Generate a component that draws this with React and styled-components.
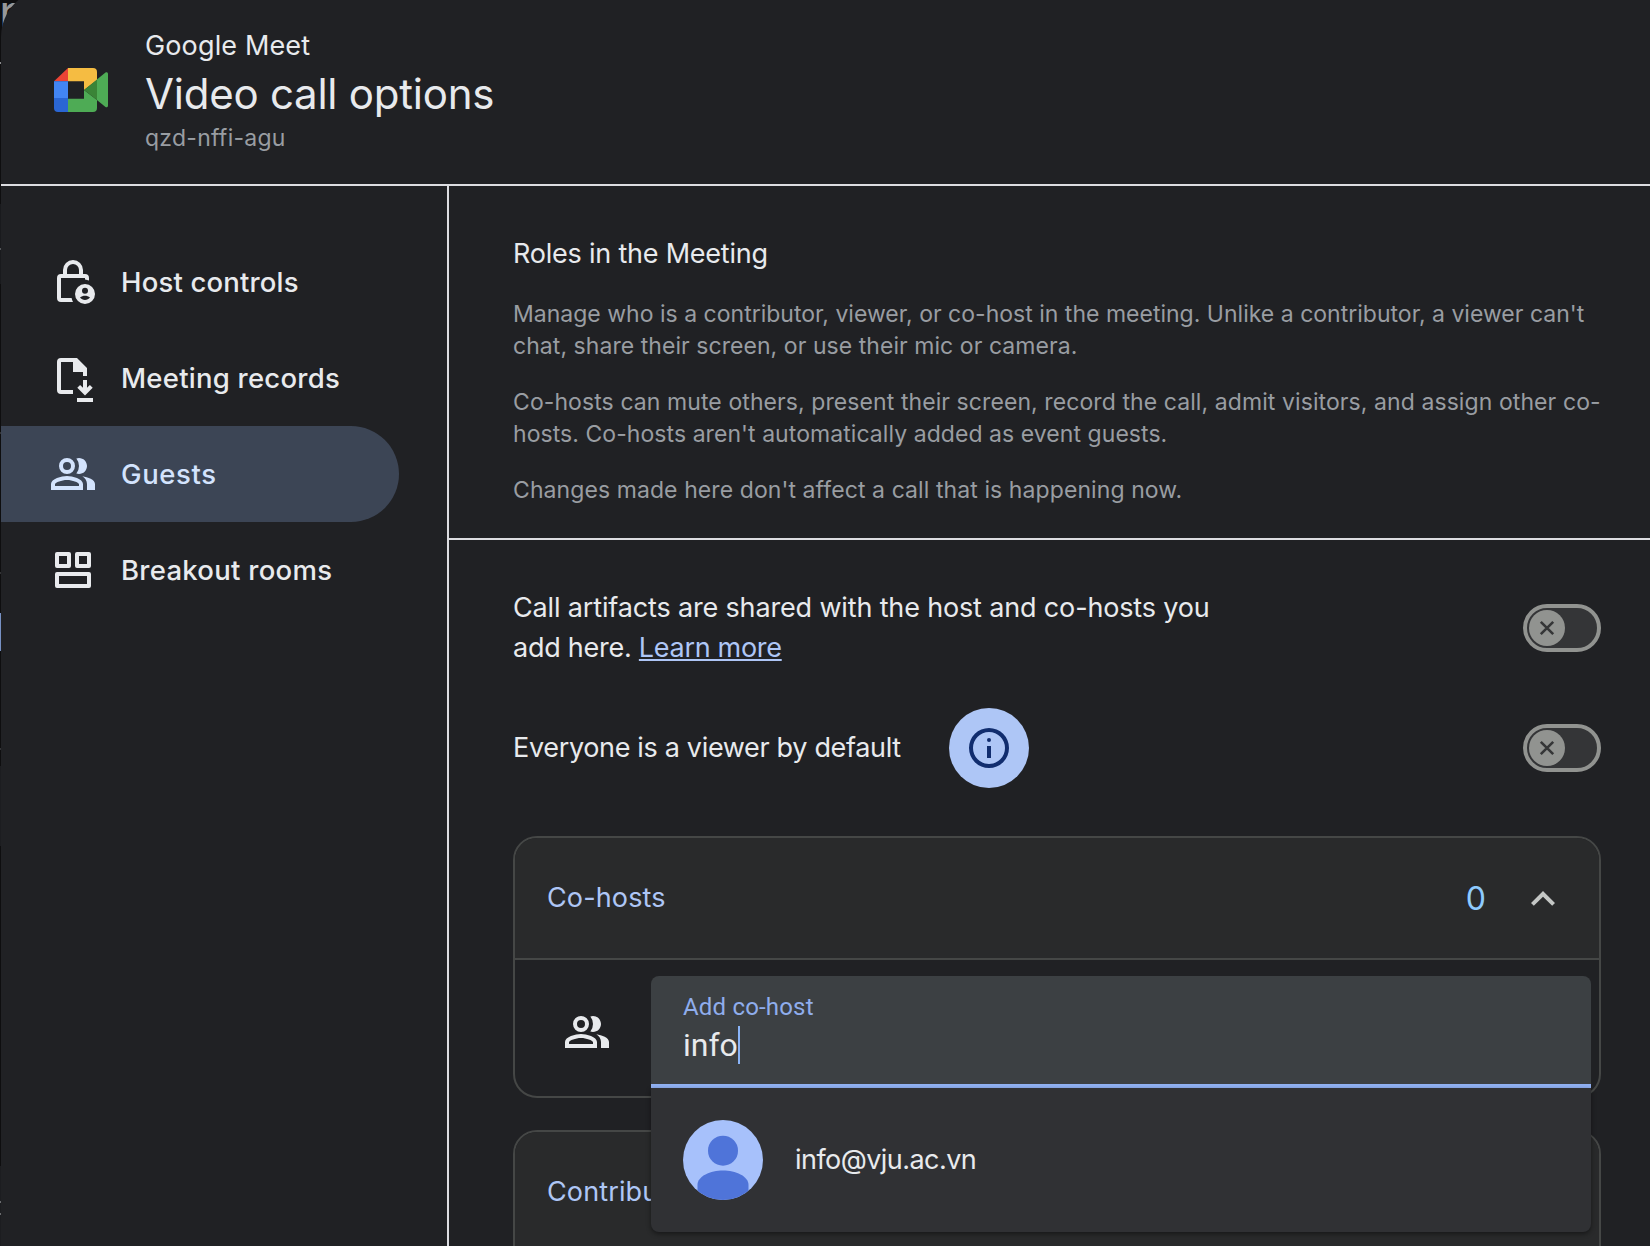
import React from "react";
import styled, { createGlobalStyle } from "styled-components";

const color = {
  surface: "#202124",
  raised: "#292a2b",
  text: "#e8eaed",
  muted: "#999da2",
  link: "#aec6f6",
  rule: "#dcdde1",
  outline: "#454746",
  toggle: "#919390",
};

const GlobalStyle = createGlobalStyle`
  *, *::before, *::after { box-sizing: border-box; }
  html, body { margin: 0; height: 100%; overflow: hidden; }
  body { background: #0e0e0f; font-family: Inter, Roboto, "Liberation Sans", sans-serif; color: ${color.text}; }
  h1, h2, p { margin: 0; font-weight: 400; }
  svg { display: block; flex: none; }
`;

const Page = styled.div`
  position: relative;
  display: flex;
  width: 1650px;
  height: 1246px;
  overflow: hidden;
  background: #0e0e0f;
`;

const BackdropText = styled.span`
  position: absolute;
  left: -1px;
  top: 0;
  font-size: 48px;
  line-height: 24px;
  color: #989898;
`;

const Edge = styled.div`
  flex: none;
  width: 1px;
  background: linear-gradient(
    #0e0e0f 62px, #8a8b8d 62px 64px, #0e0e0f 64px 204px, #191a1d 204px 248px,
    #55575a 248px 250px, #191a1d 250px 284px, #0e0e0f 284px 432px, #333436 432px 434px,
    #0e0e0f 434px 572px, #333436 572px 574px, #0e0e0f 574px 613px, #7791c4 613px 651px,
    #0e0e0f 651px 748px, #333436 748px 750px, #0e0e0f 750px 766px, #1c1d20 766px 846px,
    #0e0e0f 846px 1166px, #1c1d20 1166px 1201px, #6a6c6f 1201px 1203px, #1c1d20 1203px 1213px,
    #6a6c6f 1213px 1215px, #1c1d20 1215px
  );
`;

const Dialog = styled.main`
  position: relative;
  flex: 1;
  display: flex;
  flex-direction: column;
  margin-top: -11px;
  padding-top: 11px;
  background: ${color.surface};
  border-top-left-radius: 48px;
`;

const Header = styled.header`
  flex: none;
  display: flex;
  align-items: flex-start;
  height: 186px;
  padding: 28px 0 0 52px;
  border-bottom: 2px solid ${color.rule};
`;

const LogoSlot = styled.div`
  padding-top: 39px;
  width: 92px;
`;

const Product = styled.p`
  font-size: 27px;
  line-height: 36px;
  letter-spacing: 0.14px;
`;

const Title = styled.h1`
  margin-top: 2px;
  font-size: 42px;
  line-height: 56px;
  letter-spacing: -0.24px;
`;

const Code = styled.p`
  font-size: 23px;
  line-height: 32px;
  letter-spacing: 0.26px;
  color: ${color.muted};
`;

const Body = styled.div`
  flex: 1;
  min-height: 0;
  display: flex;
`;

const Sidebar = styled.nav`
  flex: none;
  display: flex;
  flex-direction: column;
  width: 448px;
  padding: 48px 48px 0 0;
  border-right: 2px solid ${color.rule};
`;

const NavItem = styled.a`
  display: flex;
  align-items: center;
  gap: 24px;
  height: 96px;
  padding-left: 48px;
  border-radius: 0 48px 48px 0;
  font-size: 27.5px;
  font-weight: 500;
  letter-spacing: ${(p) => p.$track}px;
  color: ${(p) => (p.$active ? "#d3e3fd" : color.text)};
  background: ${(p) => (p.$active ? "#3c4555" : "transparent")};
`;

const Content = styled.section`
  flex: 1;
  min-width: 0;
  display: flex;
  flex-direction: column;
`;

const Intro = styled.div`
  flex: none;
  height: 354px;
  padding: 48px 49px 0 64px;
  border-bottom: 2px solid ${color.rule};
`;

const IntroTitle = styled.h2`
  font-size: 27px;
  line-height: 40px;
  letter-spacing: -0.22px;
  margin-bottom: 24px;
`;

const Paragraph = styled.p`
  font-size: 23px;
  line-height: 32px;
  color: ${color.muted};
  & + & { margin-top: 24px; }
`;

const Line = styled.span`
  display: block;
  white-space: nowrap;
  letter-spacing: ${(p) => p.$track}px;
`;

const Settings = styled.div`
  flex: 1;
  min-height: 0;
  display: flex;
  flex-direction: column;
  padding: 48px 49px 0 64px;
`;

const SettingRow = styled.div`
  flex: none;
  display: flex;
  align-items: center;
  height: 80px;
  & + & { margin-top: 40px; }
`;

const SettingText = styled.p`
  font-size: 27px;
  line-height: 40px;
`;

const Link = styled.a`
  color: ${color.link};
  letter-spacing: -0.3px;
  text-decoration: underline;
  text-decoration-thickness: 2px;
  text-underline-offset: 2px;
  text-decoration-skip-ink: none;
`;

const InfoButton = styled.button`
  display: grid;
  place-items: center;
  width: 80px;
  height: 80px;
  margin-left: auto;
  padding: 0;
  border: 0;
  border-radius: 50%;
  background: ${color.link};
  color: #112d6e;
`;

const LabelGroup = styled.div`
  display: flex;
  align-items: center;
  width: 516px;
`;

const Track = styled.span`
  flex: none;
  display: flex;
  align-items: center;
  width: 78px;
  height: 48px;
  margin-left: auto;
  padding-left: 2px;
  border: 4px solid ${color.toggle};
  border-radius: 24px;
  background: #343537;
`;

const Thumb = styled.span`
  display: grid;
  place-items: center;
  width: 36px;
  height: 36px;
  border-radius: 50%;
  background: ${color.toggle};
  color: #353637;
`;

const Cards = styled.div`
  display: flex;
  flex-direction: column;
  gap: 32px;
  margin-top: 48px;
`;

const Card = styled.section`
  flex: none;
  min-height: 262px;
  border: 2px solid ${color.outline};
  border-radius: 24px;
`;

const CardHeader = styled.div`
  display: flex;
  align-items: center;
  height: 122px;
  padding: 0 32px 2px;
  border-bottom: 2px solid ${color.outline};
  border-radius: 22px 22px 0 0;
  background: ${color.raised};
  font-size: 27px;
  letter-spacing: 0.13px;
  color: ${color.link};
`;

const Count = styled.span`
  margin: 3px 33px 0 auto;
  font-size: 32px;
  letter-spacing: 0;
  color: #8ecbff;
`;

const Chevron = styled.span`
  margin-top: 4px;
  color: #c4c7c5;
`;

const CardBody = styled.div`
  display: flex;
  align-items: center;
  gap: 40px;
  height: 136px;
  padding: 16px 8px 8px 48px;
`;

const Field = styled.div`
  position: relative;
  z-index: 2;
  flex: 1;
  height: 112px;
  padding: 16px 32px 0;
  border-bottom: 4px solid #91b1f3;
  border-radius: 8px 8px 0 0;
  background: #3c4043;
  font-family: Roboto, sans-serif;
`;

const FieldLabel = styled.label`
  display: block;
  font-size: 24px;
  line-height: 30px;
  letter-spacing: 0.18px;
  color: #8fadec;
`;

const FieldValue = styled.div`
  display: flex;
  align-items: center;
  margin-top: 4px;
  height: 38px;
  font-size: 32px;
  line-height: 38px;
`;

const Caret = styled.span`
  width: 2px;
  height: 38px;
  background: #8ab4f8;
`;

const Suggestions = styled.div`
  position: absolute;
  left: 0;
  right: 0;
  top: 112px;
  height: 144px;
  border-radius: 0 0 8px 8px;
  background: #303134;
  box-shadow: 0 2px 5px rgba(0, 0, 0, 0.45);
`;

const Suggestion = styled.div`
  display: flex;
  align-items: center;
  gap: 32px;
  padding: 32px 32px 0;
`;

const Email = styled.span`
  padding-bottom: 2px;
  font-family: Inter, sans-serif;
  font-size: 27px;
  letter-spacing: -0.55px;
`;

const MeetLogo = () => (
  <svg width="56" height="46" viewBox="53 67 56 46">
    <path fill="#ea4335" d="M54 81.2 68 68v13.2z" />
    <path fill="#4285f4" d="M54 81.2h14V98H54z" />
    <path fill="#2a66d4" d="M54 98h14v14H58a4 4 0 0 1-4-4z" />
    <path fill="#f5bc42" d="M68 68h25a4 4 0 0 1 4 4v8L84 90v-8.8H68z" />
    <path fill="#4eab55" d="M84 90l13 10v8a4 4 0 0 1-4 4H68V98.8h16z" />
    <path fill="#4eab55" d="M96.9 79.6l8.600-7c1-.8 2.500-.2 2.500 1.200v32c0 1.300-1.500 2-2.500 1.200l-8.600-7z" />
    <path fill="#3a8437" d="M84 90l13-10.400v20.400z" />
  </svg>
);

const Glyph = ({ d, size = 48 }) => (
  <svg width={size} height={size} viewBox="0 0 24 24" fill="currentColor" fillRule="evenodd">
    {d.map((path) => (
      <path key={path} d={path} />
    ))}
  </svg>
);

const icons = {
  lock: [
    "M9 8V6a3 3 0 0 1 6 0v2h2V6A5 5 0 0 0 7 6v2z",
    "M6 8h12a2 2 0 0 1 2 2v1.300a7 7 0 0 0-2-.6V10H6v10h5.300a7 7 0 0 0 .7 2H6a2 2 0 0 1-2-2V10a2 2 0 0 1 2-2z",
    "M18 13a5 5 0 1 1 0 10 5 5 0 0 1 0-10zm0 1.900a1.500 1.500 0 1 0 0 3 1.500 1.500 0 0 0 0-3zm-2.500 4.900c.6.8 1.500 1.200 2.500 1.200s1.900-.4 2.500-1.200c-.7-.6-1.600-.9-2.500-.9s-1.800.3-2.500.9z",
  ],
  records: [
    "M6 2h8l5 5v4h-2V9h-5V4H6v14h6v2H6a2 2 0 0 1-2-2V4a2 2 0 0 1 2-2z",
    "M17 13h2v3.900l1.450-1.450 1.400 1.400L18 20.700l-3.850-3.850 1.400-1.400L17 16.900z",
    "M14 22h8v2h-8z",
  ],
  people: [
    "M9 4a4 4 0 1 1 0 8 4 4 0 0 1 0-8zm0 2a2 2 0 1 0 0 4 2 2 0 0 0 0-4z",
    "M9 13c2.670 0 8 1.340 8 4v3H1v-3c0-2.660 5.330-4 8-4zm0 2c-2.700 0-5.800 1.290-6 2.010V18h12v-1c-.2-.71-3.300-2-6-2z",
    "M15 12c2.210 0 4-1.790 4-4s-1.790-4-4-4c-.47 0-.91.1-1.330.24a5.980 5.980 0 0 1 0 7.520c.42.14.86.24 1.330.24z",
    "M16.670 13.130C18.040 14.060 19 15.320 19 17v3h4v-3c0-2.180-3.570-3.470-6.330-3.870z",
  ],
  rooms: [
    "M4 3h6a1 1 0 0 1 1 1v6a1 1 0 0 1-1 1H4a1 1 0 0 1-1-1V4a1 1 0 0 1 1-1zm1 2v4h4V5z",
    "M14 3h6a1 1 0 0 1 1 1v6a1 1 0 0 1-1 1h-6a1 1 0 0 1-1-1V4a1 1 0 0 1 1-1zm1 2v4h4V5z",
    "M4 13h16a1 1 0 0 1 1 1v6a1 1 0 0 1-1 1H4a1 1 0 0 1-1-1v-6a1 1 0 0 1 1-1zm1 2v4h14v-4z",
  ],
  info: [
    "M12 2a10 10 0 1 1 0 20 10 10 0 0 1 0-20zm0 2a8 8 0 1 0 0 16 8 8 0 0 0 0-16z",
    "M12 7a1 1 0 1 1 0 2 1 1 0 0 1 0-2z",
    "M11 11h2v6h-2z",
  ],
  chevron: ["M12 8l-6 6 1.410 1.410L12 10.830l4.590 4.580L18 14z"],
};

const Avatar = () => (
  <svg width="80" height="80" viewBox="0 0 80 80">
    <clipPath id="avatar-clip">
      <circle cx="40" cy="40" r="40" />
    </clipPath>
    <g clipPath="url(#avatar-clip)">
      <rect width="80" height="80" fill="#a7c1fb" />
      <circle cx="40" cy="30.700" r="15" fill="#4f74d9" />
      <path d="M14.500 80V65c0-9 13-14.500 25.500-14.500S65.500 56 65.500 65v15z" fill="#4f74d9" />
    </g>
  </svg>
);

const Toggle = () => (
  <Track role="switch" aria-checked="false">
    <Thumb>
      <svg width="16" height="16" viewBox="0 0 16 16" stroke="currentColor" strokeWidth="2.600">
        <path d="M1.800 1.800l12.400 12.400M14.200 1.800L1.800 14.200" />
      </svg>
    </Thumb>
  </Track>
);

const navItems = [
  { label: "Host controls", icon: "lock", track: 0.17 },
  { label: "Meeting records", icon: "records", track: 0.25 },
  { label: "Guests", icon: "people", track: 0.6, active: true },
  { label: "Breakout rooms", icon: "rooms", track: 0.28 },
];

const intro = [
  [
    ["Manage who is a contributor, viewer, or co-host in the meeting. Unlike a contributor, a viewer can't", 0.01],
    ["chat, share their screen, or use their mic or camera.", 0.055],
  ],
  [
    ["Co-hosts can mute others, present their screen, record the call, admit visitors, and assign other co-", 0.085],
    ["hosts. Co-hosts aren't automatically added as event guests.", 0.06],
  ],
  [["Changes made here don't affect a call that is happening now.", 0.085]],
];

export default function App() {
  return (
    <>
      <GlobalStyle />
      <Page>
        <BackdropText>r</BackdropText>
        <Edge />
        <Dialog>
          <Header>
            <LogoSlot>
              <MeetLogo />
            </LogoSlot>
            <div>
              <Product>Google Meet</Product>
              <Title>Video call options</Title>
              <Code>qzd-nffi-agu</Code>
            </div>
          </Header>
          <Body>
            <Sidebar>
              {navItems.map((item) => (
                <NavItem key={item.label} $active={item.active} $track={item.track}>
                  <Glyph d={icons[item.icon]} />
                  {item.label}
                </NavItem>
              ))}
            </Sidebar>
            <Content>
              <Intro>
                <IntroTitle>Roles in the Meeting</IntroTitle>
                {intro.map((lines) => (
                  <Paragraph key={lines[0][0]}>
                    {lines.map(([text, track]) => (
                      <Line key={text} $track={track}>{text}</Line>
                    ))}
                  </Paragraph>
                ))}
              </Intro>
              <Settings>
                <SettingRow>
                  <SettingText>
                    <Line $track={-0.155}>Call artifacts are shared with the host and co-hosts you</Line>
                    <Line $track={-0.25}>
                      add here. <Link>Learn more</Link>
                    </Line>
                  </SettingText>
                  <Toggle />
                </SettingRow>
                <SettingRow>
                  <LabelGroup>
                    <SettingText>
                      <Line $track={-0.33}>Everyone is a viewer by default</Line>
                    </SettingText>
                    <InfoButton aria-label="Info">
                      <Glyph d={icons.info} />
                    </InfoButton>
                  </LabelGroup>
                  <Toggle />
                </SettingRow>
                <Cards>
                  <Card>
                    <CardHeader>
                      Co-hosts
                      <Count>0</Count>
                      <Chevron>
                        <Glyph d={icons.chevron} />
                      </Chevron>
                    </CardHeader>
                    <CardBody>
                      <Glyph d={icons.people} />
                      <Field>
                        <FieldLabel>Add co-host</FieldLabel>
                        <FieldValue>
                          info
                          <Caret />
                        </FieldValue>
                        <Suggestions>
                          <Suggestion>
                            <Avatar />
                            <Email>info@vju.ac.vn</Email>
                          </Suggestion>
                        </Suggestions>
                      </Field>
                    </CardBody>
                  </Card>
                  <Card>
                    <CardHeader>Contributors</CardHeader>
                  </Card>
                </Cards>
              </Settings>
            </Content>
          </Body>
        </Dialog>
      </Page>
    </>
  );
}
